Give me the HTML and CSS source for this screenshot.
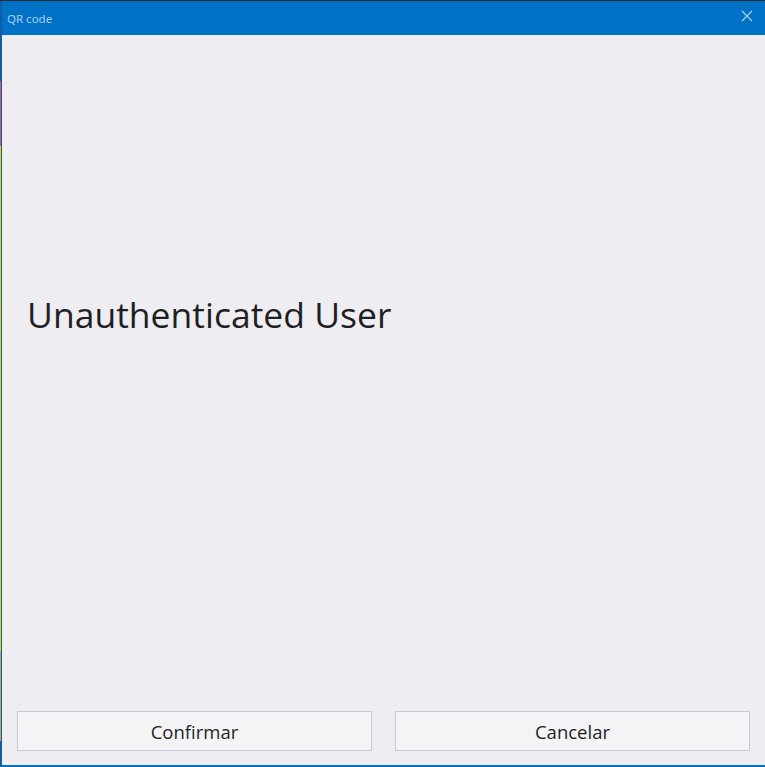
FILE: index.html
```html
<!DOCTYPE html>
<html>
<head>
<meta charset="utf-8">
<link rel="stylesheet" href="styles.css">
</head>
<body>
<div class="screen">
  <div class="desk-edge"></div>
  <div class="window">
    <div class="titlebar">
      <span class="title">QR code</span>
      <svg class="close" width="12" height="12" viewBox="0 0 12 12"><path d="M1 1 L11 11 M11 1 L1 11" stroke="#a9cdef" stroke-width="1.2" fill="none"/></svg>
    </div>
    <div class="content">
      <h1 class="heading">Unauthenticated User</h1>
      <div class="actions">
        <button class="btn">Confirmar</button>
        <button class="btn">Cancelar</button>
      </div>
    </div>
  </div>
</div>
</body>
</html>
```
FILE: styles.css
```css
html, body {
  margin: 0;
  padding: 0;
  background: #eeedf2;
}
.screen {
  display: flex;
  width: 765px;
  height: 767px;
  border-top: 1px solid #2b2b2e;
  box-sizing: border-box;
  font-family: "Open Sans", "Noto Sans", sans-serif;
}
.desk-edge {
  width: 1px;
  flex: none;
  background: linear-gradient(to bottom,
    #1e5aa0 0px, #1e5aa0 80px,
    #d9546a 80px, #d9546a 145px,
    #f2d600 145px, #f2d600 650px,
    #c9a05a 650px, #c9a05a 740px,
    #1e5aa0 740px);
}
.window {
  flex: 1;
  display: flex;
  flex-direction: column;
  border-left: 1px solid #0a5ea8;
  border-bottom: 2px solid #0072c6;
}
.titlebar {
  height: 34px;
  flex: none;
  background: #0072c6;
  display: flex;
  align-items: center;
  justify-content: space-between;
  padding: 0 12px 0 5px;
}
.title {
  color: #a9cdef;
  font-size: 11.5px;
  font-family: "Noto Sans", sans-serif;
  margin-top: 1px;
}
.close {
  margin-bottom: 4px;
}
.content {
  flex: 1;
  display: flex;
  flex-direction: column;
  padding: 0 15px 14px 15px;
}
.heading {
  margin: 256px 0 0 10px;
  font-weight: 400;
  font-size: 35.5px;
  color: #1f1f22;
  line-height: 46px;
  flex: 1;
}
.actions {
  display: flex;
  gap: 23px;
}
.btn {
  flex: 1;
  height: 40px;
  background: #f4f4f7;
  border: 1px solid #cbc9d8;
  font-family: "Open Sans", "Noto Sans", sans-serif;
  font-size: 18.5px;
  color: #1f1f22;
  padding: 0;
}
```
